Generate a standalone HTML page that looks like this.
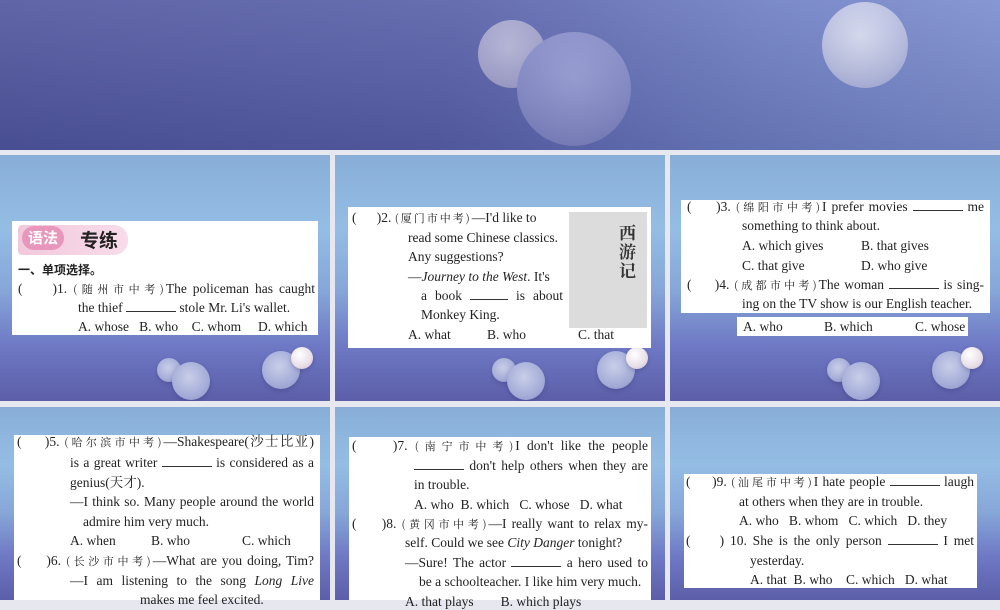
<!DOCTYPE html>
<html><head><meta charset="utf-8"><style>
*{margin:0;padding:0;box-sizing:border-box}
body{width:1000px;height:600px;overflow:hidden;background:#e6e7ef;position:relative;font-family:"Liberation Serif","Noto Serif CJK SC",serif;color:#222}
.banner{position:absolute;left:0;top:0;width:1000px;height:150px;background:linear-gradient(100deg,#5258a0 0%,#5a62aa 45%,#7080c4 75%,#7e90d0 100%)}
.banner:after{content:"";position:absolute;inset:0;background:linear-gradient(180deg,rgba(255,255,255,.08),rgba(0,0,40,.12))}
.p{position:absolute;width:330px;overflow:hidden;background:linear-gradient(180deg,#88aed8 0%,#94bde4 30%,#86a6d8 55%,#6e78c4 78%,#5c5ea8 100%)}
.ball{position:absolute;border-radius:50%;background:radial-gradient(circle at 45% 40%,#c8cee8 0%,#a8b0da 55%,#8890c8 100%);box-shadow:0 2px 4px rgba(40,40,90,.25)}
.box{position:absolute;background:#fff}
.l{position:absolute;font-size:13.5px;line-height:16px;white-space:nowrap}
.j{text-align:justify;text-align-last:justify;white-space:normal}
.cn{font-family:"Noto Serif CJK SC","Liberation Serif",serif;font-size:11px;letter-spacing:2px}
.b{display:inline-block;border-bottom:1px solid #333;height:10px;vertical-align:baseline}
i{font-style:italic}
</style></head><body>
<div class="banner">
<div class="ball" style="left:478px;top:20px;width:68px;height:68px;background:radial-gradient(circle at 45% 40%,#b8b8da,#a0a0cc 70%,#8888bc);box-shadow:none"></div>
<div class="ball" style="left:517px;top:32px;width:114px;height:114px;background:radial-gradient(circle at 50% 40%,#9ca2d8,#8a90cc 60%,#7a80c0);box-shadow:none"></div>
<div class="ball" style="left:822px;top:2px;width:86px;height:86px;background:radial-gradient(circle at 45% 40%,#d8dcf0,#b8bee2 60%,#98a0d2);box-shadow:none"></div>
</div>

<!-- row 2 -->
<div class="p" style="left:0;top:155px;height:246px">
<div class="ball" style="left:157px;top:203px;width:24px;height:24px"></div>
<div class="ball" style="left:172px;top:207px;width:38px;height:38px"></div>
<div class="ball" style="left:262px;top:196px;width:38px;height:38px"></div>
<div class="ball" style="left:291px;top:192px;width:22px;height:22px;background:radial-gradient(circle at 40% 35%,#fff,#e8dfe8 60%,#c8b8d0)"></div>
</div>
<div class="p" style="left:335px;top:155px;height:246px">
<div class="ball" style="left:157px;top:203px;width:24px;height:24px"></div>
<div class="ball" style="left:172px;top:207px;width:38px;height:38px"></div>
<div class="ball" style="left:262px;top:196px;width:38px;height:38px"></div>
<div class="ball" style="left:291px;top:192px;width:22px;height:22px;background:radial-gradient(circle at 40% 35%,#fff,#e8dfe8 60%,#c8b8d0)"></div>
</div>
<div class="p" style="left:670px;top:155px;height:246px">
<div class="ball" style="left:157px;top:203px;width:24px;height:24px"></div>
<div class="ball" style="left:172px;top:207px;width:38px;height:38px"></div>
<div class="ball" style="left:262px;top:196px;width:38px;height:38px"></div>
<div class="ball" style="left:291px;top:192px;width:22px;height:22px;background:radial-gradient(circle at 40% 35%,#fff,#e8dfe8 60%,#c8b8d0)"></div>
</div>
<!-- row 3 -->
<div class="p" style="left:0;top:407px;height:193px"></div>
<div class="p" style="left:335px;top:407px;height:193px"></div>
<div class="p" style="left:670px;top:407px;height:193px"></div>

<!-- panel 1 -->
<div class="box" style="left:12px;top:221px;width:306px;height:114px"></div>
<div style="position:absolute;left:18px;top:225px;width:110px;height:30px;border-radius:4px 14px 14px 4px;background:linear-gradient(90deg,#f2c8dc,#f8dcea);"></div>
<div style="position:absolute;left:22px;top:226px;width:42px;height:24px;border-radius:12px;background:#e896bc;color:#fff;font-family:'Noto Sans CJK SC',sans-serif;font-weight:bold;font-size:15px;line-height:24px;text-align:center">语法</div>
<div style="position:absolute;left:80px;top:227px;font-family:'Noto Sans CJK SC',sans-serif;font-weight:bold;font-size:19px;line-height:26px;color:#222">专练</div>
<div class="l" style="left:18px;top:262px;font-family:'Noto Sans CJK SC',sans-serif;font-weight:bold;font-size:12px">一、单项选择。</div>
<div class="l j" style="left:18px;top:281px;width:297px">( &nbsp;&nbsp;&nbsp;&nbsp;)1. <span class="cn">(随州市中考)</span>The policeman has caught</div>
<div class="l" style="left:78px;top:300px">the thief <span class="b" style="width:50px"></span> stole Mr. Li's wallet.</div>
<div class="l" style="left:78px;top:319px">A. whose &nbsp;&nbsp;B. who &nbsp;&nbsp;&nbsp;C. whom &nbsp;&nbsp;&nbsp;&nbsp;D. which</div>

<!-- panel 2 -->
<div class="box" style="left:348px;top:207px;width:303px;height:141px"></div>
<div style="position:absolute;left:569px;top:212px;width:78px;height:116px;background:#dcdcdc"></div>
<div style="position:absolute;left:619px;top:222px;width:24px;font-family:'Noto Serif CJK SC',serif;font-weight:bold;font-size:17px;line-height:19px;color:#333">西<br>游<br>记</div>
<div class="l" style="left:352px;top:210px">( &nbsp;&nbsp;&nbsp;&nbsp;&nbsp;)2. <span class="cn">(厦门市中考)</span>—I'd like to</div>
<div class="l" style="left:408px;top:230px">read some Chinese classics.</div>
<div class="l" style="left:408px;top:249px">Any suggestions?</div>
<div class="l" style="left:408px;top:269px">—<i>Journey to the West</i>. It's</div>
<div class="l j" style="left:421px;top:288px;width:142px">a book <span class="b" style="width:38px"></span> is about</div>
<div class="l" style="left:421px;top:307px">Monkey King.</div>
<div class="l" style="left:408px;top:327px">A. what</div><div class="l" style="left:487px;top:327px">B. who</div><div class="l" style="left:578px;top:327px">C. that</div>

<!-- panel 3 -->
<div class="box" style="left:681px;top:200px;width:309px;height:113px"></div>
<div class="box" style="left:737px;top:317px;width:231px;height:19px"></div>
<div class="l j" style="left:687px;top:199px;width:297px">( &nbsp;&nbsp;&nbsp;&nbsp;)3. <span class="cn">(绵阳市中考)</span>I prefer movies <span class="b" style="width:50px"></span> me</div>
<div class="l" style="left:742px;top:218px">something to think about.</div>
<div class="l" style="left:742px;top:238px">A. which gives</div><div class="l" style="left:861px;top:238px">B. that gives</div>
<div class="l" style="left:742px;top:258px">C. that give</div><div class="l" style="left:861px;top:258px">D. who give</div>
<div class="l j" style="left:687px;top:277px;width:297px">( &nbsp;&nbsp;&nbsp;&nbsp;)4. <span class="cn">(成都市中考)</span>The woman <span class="b" style="width:50px"></span> is sing-</div>
<div class="l" style="left:742px;top:296px">ing on the TV show is our English teacher.</div>
<div class="l" style="left:743px;top:319px">A. who</div><div class="l" style="left:824px;top:319px">B. which</div><div class="l" style="left:915px;top:319px">C. whose</div>

<!-- panel 4 -->
<div class="box" style="left:14px;top:435px;width:306px;height:165px"></div>
<div class="l j" style="left:17px;top:434px;width:297px">( &nbsp;&nbsp;&nbsp;&nbsp;)5. <span class="cn">(哈尔滨市中考)</span>—Shakespeare(沙士比亚)</div>
<div class="l j" style="left:70px;top:455px;width:244px">is a great writer <span class="b" style="width:50px"></span> is considered as a</div>
<div class="l" style="left:70px;top:475px">genius(天才).</div>
<div class="l j" style="left:70px;top:494px;width:244px">—I think so. Many people around the world</div>
<div class="l" style="left:83px;top:514px">admire him very much.</div>
<div class="l" style="left:70px;top:533px">A. when</div><div class="l" style="left:151px;top:533px">B. who</div><div class="l" style="left:242px;top:533px">C. which</div>
<div class="l j" style="left:17px;top:553px;width:297px">( &nbsp;&nbsp;&nbsp;&nbsp;)6. <span class="cn">(长沙市中考)</span>—What are you doing, Tim?</div>
<div class="l j" style="left:70px;top:573px;width:244px">—I am listening to the song <i>Long Live</i></div>
<div class="l" style="left:140px;top:592px">makes me feel excited.</div>

<!-- panel 5 -->
<div class="box" style="left:349px;top:437px;width:302px;height:163px"></div>
<div class="l j" style="left:352px;top:438px;width:296px">( &nbsp;&nbsp;&nbsp;&nbsp;)7. <span class="cn">(南宁市中考)</span>I don't like the people</div>
<div class="l j" style="left:414px;top:458px;width:234px"><span class="b" style="width:50px"></span> don't help others when they are</div>
<div class="l" style="left:414px;top:477px">in trouble.</div>
<div class="l" style="left:414px;top:497px">A. who &nbsp;B. which &nbsp;&nbsp;C. whose &nbsp;&nbsp;D. what</div>
<div class="l j" style="left:352px;top:516px;width:296px">( &nbsp;&nbsp;&nbsp;&nbsp;)8. <span class="cn">(黄冈市中考)</span>—I really want to relax my-</div>
<div class="l" style="left:405px;top:535px">self. Could we see <i>City Danger</i> tonight?</div>
<div class="l j" style="left:405px;top:555px;width:243px">—Sure! The actor <span class="b" style="width:50px"></span> a hero used to</div>
<div class="l" style="left:419px;top:574px">be a schoolteacher. I like him very much.</div>
<div class="l" style="left:405px;top:594px">A. that plays &nbsp;&nbsp;&nbsp;&nbsp;&nbsp;&nbsp;&nbsp;B. which plays</div>

<!-- panel 6 -->
<div class="box" style="left:684px;top:474px;width:293px;height:114px"></div>
<div class="l j" style="left:686px;top:474px;width:288px">( &nbsp;&nbsp;&nbsp;&nbsp;)9. <span class="cn">(汕尾市中考)</span>I hate people <span class="b" style="width:50px"></span> laugh</div>
<div class="l" style="left:739px;top:494px">at others when they are in trouble.</div>
<div class="l" style="left:739px;top:513px">A. who &nbsp;&nbsp;B. whom &nbsp;&nbsp;C. which &nbsp;&nbsp;D. they</div>
<div class="l j" style="left:686px;top:533px;width:288px">( &nbsp;&nbsp;&nbsp;&nbsp;) 10. She is the only person <span class="b" style="width:50px"></span> I met</div>
<div class="l" style="left:750px;top:553px">yesterday.</div>
<div class="l" style="left:750px;top:572px">A. that &nbsp;B. who &nbsp;&nbsp;&nbsp;C. which &nbsp;&nbsp;D. what</div>
</body></html>
